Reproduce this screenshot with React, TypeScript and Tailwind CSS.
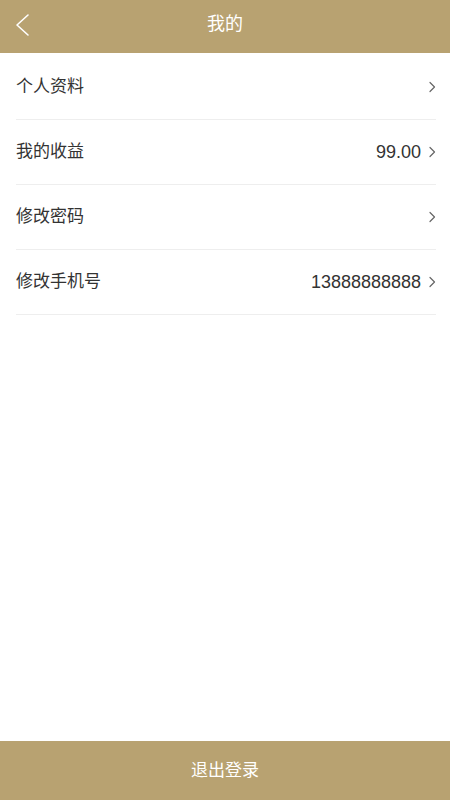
const rows = [
  { label: "个人资料", value: "" },
  { label: "我的收益", value: "99.00" },
  { label: "修改密码", value: "" },
  { label: "修改手机号", value: "13888888888" },
];

const font = { fontFamily: '"Helvetica Neue", "Liberation Sans", "Noto Sans CJK SC", sans-serif' };

function Chevron() {
  return (
    <svg width="8" height="12" viewBox="0 0 8 12" fill="none" stroke="#666666" strokeWidth="1.2" strokeLinecap="round" strokeLinejoin="round">
      <path d="M2 1.5 L6.5 6 L2 10.5" />
    </svg>
  );
}

export default function App() {
  return (
    <div className="flex h-[800px] w-[450px] flex-col bg-white" style={font}>
      <header className="relative flex h-[53px] shrink-0 items-center justify-center bg-[#b8a271] pb-[5px]">
        <button className="absolute left-[14px] top-[12px] text-white">
          <svg width="18" height="26" viewBox="0 0 18 26" fill="none" stroke="currentColor" strokeWidth="1.6" strokeLinecap="round" strokeLinejoin="round">
            <path d="M14 3 L3 13 L14 23" />
          </svg>
        </button>
        <h1 className="text-[18px] text-white">我的</h1>
      </header>

      <div className="flex-1 pl-4 pr-[14px] pt-[2px]">
        {rows.map((r) => (
          <div key={r.label} className="flex h-[65px] items-center justify-between border-b border-[#eeeeee]">
            <span className="text-[17px] text-[#333333]">{r.label}</span>
            <div className="flex items-center gap-[7px] text-[#333333]">
              {r.value && <span className="text-[18px]">{r.value}</span>}
              <Chevron />
            </div>
          </div>
        ))}
      </div>

      <button className="flex h-[59px] shrink-0 items-center justify-center bg-[#b8a271] text-[17px] text-white">退出登录</button>
    </div>
  );
}
